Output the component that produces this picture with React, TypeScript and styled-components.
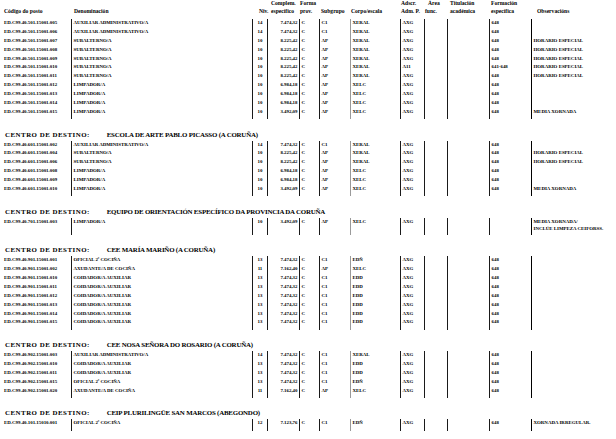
import React from 'react';
import styled, { createGlobalStyle } from 'styled-components';

const GlobalStyle = createGlobalStyle`
  html, body {
    margin: 0;
    padding: 0;
    background: #fff;
  }
  body {
    font-family: "Liberation Serif", "Times New Roman", serif;
    color: #000;
  }
`;

// column widths of the body rows (left borders at 71, 252, 267, 299, 319, 350, 400, 424, 447, 489, 531)
const BODY_COLS = '71px 181px 15px 32px 20px 31px 50px 24px 23px 42px 42px 85px';
// the header labels sit a little to the right of the rules
const HEAD_COLS = '74px 185px 12px 29px 21px 30px 50px 24px 25px 41px 46px 79px';

const Page = styled.div`
  width: 616px;
  padding-top: 0.25px;
`;

const HeaderRow = styled.div`
  display: grid;
  grid-template-columns: ${HEAD_COLS};
  align-items: end;
  height: 15px;
  margin-bottom: 4px;
`;

const HeadCell = styled.div<{ $indent?: number; $pad?: number }>`
  font-size: 5.6px;
  font-weight: 700;
  line-height: 7.5px;
  white-space: nowrap;
  padding-left: ${(p) => p.$pad ?? 0}px;
  text-indent: ${(p) => p.$indent ?? 0}px;
`;

const Section = styled.section<{ $first?: boolean }>`
  margin-top: ${(p) => (p.$first ? 0 : 9.5)}px;
`;

const Heading = styled.h2`
  margin: 0;
  padding-left: 5px;
  font-size: 6.9px;
  font-weight: 700;
  line-height: 12px;
  letter-spacing: -0.2px;
  white-space: nowrap;
`;

const HeadingLabel = styled.span`
  display: inline-block;
  width: 101.7px;
  letter-spacing: 0.5px;
`;

const Row = styled.div<{ $tail?: boolean }>`
  display: grid;
  grid-template-columns: ${BODY_COLS};
  font-size: 4.9px;
  font-weight: 700;
  line-height: 8.85px;

  ${(p) => p.$tail && '& > div { padding-bottom: 2.5px; }'}
`;

type Rule = 'none' | 'black' | 'gray' | 'heavy';

const Cell = styled.div<{ $rule: Rule; $align?: 'left' | 'center' | 'right'; $multi?: boolean }>`
  box-sizing: border-box;
  white-space: nowrap;
  text-align: ${(p) => p.$align ?? 'left'};
  padding-left: ${(p) => (p.$rule === 'none' ? 4 : p.$align === 'left' || !p.$align ? 1.5 : 0)}px;
  padding-right: ${(p) => (p.$align === 'right' ? 1.5 : 0)}px;
  border-left: ${(p) =>
    p.$rule === 'none'
      ? '0'
      : p.$rule === 'gray'
      ? '1px solid #9a9a9a'
      : p.$rule === 'heavy'
      ? '1.5px solid #000'
      : '1px solid #1a1a1a'};
  ${(p) => p.$multi && 'line-height: 7px; padding-top: 0.9px;'}
`;

const RULES: Rule[] = ['none', 'black', 'black', 'black', 'black', 'black', 'gray', 'black', 'black', 'black', 'black', 'heavy'];
const ALIGN: ('left' | 'center' | 'right')[] = ['left', 'left', 'center', 'right', 'left', 'left', 'left', 'left', 'left', 'left', 'left', 'left'];

const HEADERS: { lines: string[]; indent?: number }[] = [
  { lines: ['Código do posto'] },
  { lines: ['Denominación'] },
  { lines: ['Niv.'] },
  { lines: ['Complem.', 'específico'] },
  { lines: ['Forma', 'prov.'] },
  { lines: ['Subgrupo'] },
  { lines: ['Corpo/escala'] },
  { lines: ['Adscr.', 'Adm. P.'] },
  { lines: ['Área', 'func.'], indent: 3 },
  { lines: ['Titulación', 'académica'] },
  { lines: ['Formación', 'específica'] },
  { lines: ['Observacións'] },
];

const AUX = 'AUXILIAR ADMINISTRATIVO/A';
const SUB = 'SUBALTERNO/A';
const LIM = 'LIMPADOR/A';
const OFI = 'OFICIAL 2ª COCIÑA';
const AXU = 'AXUDANTE/A DE COCIÑA';
const COI = 'COIDADOR/A AUXILIAR';
const HOR = 'HORARIO ESPECIAL';

// code, denominación, niv, complemento, forma, subgrupo, corpo, adscr, área, titulación, formación, observacións
type Post = string[];

const p = (
  code: string,
  name: string,
  niv: string,
  comp: string,
  sub: string,
  corpo: string,
  adscr: string,
  form: string,
  obs = ''
): Post => [code, name, niv, comp, 'C', sub, corpo, adscr, '', '', form, obs];

const SECTIONS: { centre?: string; posts: Post[] }[] = [
  {
    posts: [
      p('ED.C99.40.501.15001.005', AUX, '14', '7.474,32', 'C1', 'XERAL', 'AXG', '648'),
      p('ED.C99.40.501.15001.006', AUX, '14', '7.474,32', 'C1', 'XERAL', 'AXG', '648'),
      p('ED.C99.40.501.15001.007', SUB, '10', '8.225,42', 'AP', 'XERAL', 'AXG', '648', HOR),
      p('ED.C99.40.501.15001.008', SUB, '10', '8.225,42', 'AP', 'XERAL', 'AXG', '648', HOR),
      p('ED.C99.40.501.15001.009', SUB, '10', '8.225,42', 'AP', 'XERAL', 'AXG', '648', HOR),
      p('ED.C99.40.501.15001.010', SUB, '10', '8.225,42', 'AP', 'XERAL', 'A11', '641-648', HOR),
      p('ED.C99.40.501.15001.011', SUB, '10', '8.225,42', 'AP', 'XERAL', 'AXG', '648', HOR),
      p('ED.C99.40.501.15001.012', LIM, '10', '6.984,18', 'AP', 'XELC', 'AXG', '648'),
      p('ED.C99.40.501.15001.013', LIM, '10', '6.984,18', 'AP', 'XELC', 'AXG', '648'),
      p('ED.C99.40.501.15001.014', LIM, '10', '6.984,18', 'AP', 'XELC', 'AXG', '648'),
      p('ED.C99.40.501.15001.015', LIM, '10', '3.492,09', 'AP', 'XELC', 'AXG', '648', 'MEDIA XORNADA'),
    ],
  },
  {
    centre: 'ESCOLA DE ARTE PABLO PICASSO (A CORUÑA)',
    posts: [
      p('ED.C99.40.601.15001.002', AUX, '14', '7.474,32', 'C1', 'XERAL', 'AXG', '648'),
      p('ED.C99.40.601.15001.004', SUB, '10', '8.225,42', 'AP', 'XERAL', 'AXG', '648', HOR),
      p('ED.C99.40.601.15001.006', SUB, '10', '8.225,42', 'AP', 'XERAL', 'AXG', '648', HOR),
      p('ED.C99.40.601.15001.008', LIM, '10', '6.984,18', 'AP', 'XELC', 'AXG', '648'),
      p('ED.C99.40.601.15001.009', LIM, '10', '6.984,18', 'AP', 'XELC', 'AXG', '648'),
      p('ED.C99.40.601.15001.010', LIM, '10', '3.492,09', 'AP', 'XELC', 'AXG', '648', 'MEDIA XORNADA'),
    ],
  },
  {
    centre: 'EQUIPO DE ORIENTACIÓN ESPECÍFICO DA PROVINCIA DA CORUÑA',
    posts: [
      p('ED.C99.40.701.15001.003', LIM, '10', '3.492,09', 'AP', 'XELC', 'AXG', '', 'MEDIA XORNADA/\nINCLÚE LIMPEZA CEIFORSS.'),
    ],
  },
  {
    centre: 'CEE MARÍA MARIÑO (A CORUÑA)',
    posts: [
      p('ED.C99.40.901.15001.001', OFI, '13', '7.474,32', 'C1', 'EDÑ', 'AXG', '648'),
      p('ED.C99.40.901.15001.002', AXU, '11', '7.162,40', 'AP', 'XELC', 'AXG', '648'),
      p('ED.C99.40.901.15001.010', COI, '13', '7.474,32', 'C1', 'EDD', 'AXG', '648'),
      p('ED.C99.40.901.15001.011', COI, '13', '7.474,32', 'C1', 'EDD', 'AXG', '648'),
      p('ED.C99.40.901.15001.012', COI, '13', '7.474,32', 'C1', 'EDD', 'AXG', '648'),
      p('ED.C99.40.901.15001.013', COI, '13', '7.474,32', 'C1', 'EDD', 'AXG', '648'),
      p('ED.C99.40.901.15001.014', COI, '13', '7.474,32', 'C1', 'EDD', 'AXG', '648'),
      p('ED.C99.40.901.15001.015', COI, '13', '7.474,32', 'C1', 'EDD', 'AXG', '648'),
    ],
  },
  {
    centre: 'CEE NOSA SEÑORA DO ROSARIO (A CORUÑA)',
    posts: [
      p('ED.C99.40.902.15001.003', AUX, '14', '7.474,32', 'C1', 'XERAL', 'AXG', '648'),
      p('ED.C99.40.902.15001.010', COI, '13', '7.474,32', 'C1', 'EDD', 'AXG', '648'),
      p('ED.C99.40.902.15001.011', COI, '13', '7.474,32', 'C1', 'EDD', 'AXG', '648'),
      p('ED.C99.40.902.15001.015', OFI, '13', '7.474,32', 'C1', 'EDÑ', 'AXG', '648'),
      p('ED.C99.40.902.15001.020', AXU, '11', '7.162,40', 'AP', 'XELC', 'AXG', '648'),
    ],
  },
  {
    centre: 'CEIP PLURILINGÜE SAN MARCOS (ABEGONDO)',
    posts: [
      p('ED.C99.40.101.15010.001', OFI, '12', '7.123,76', 'C1', 'EDÑ', 'AXG', '648', 'XORNADA IRREGULAR.'),
    ],
  },
];

const Lines: React.FC<{ text: string }> = ({ text }) => (
  <>
    {text.split('\n').map((line, j) => (
      <React.Fragment key={j}>
        {j > 0 && <br />}
        {line}
      </React.Fragment>
    ))}
  </>
);

const PostRow: React.FC<{ post: Post; tail: boolean }> = ({ post, tail }) => (
  <Row $tail={tail}>
    {post.map((value, i) => (
      <Cell key={i} $rule={RULES[i]} $align={ALIGN[i]} $multi={value.includes('\n')}>
        <Lines text={value} />
      </Cell>
    ))}
  </Row>
);

const App: React.FC = () => {
  return (
    <Page>
      <GlobalStyle />
      <HeaderRow>
        {HEADERS.map((h, i) => (
          <HeadCell key={i} $pad={i === 0 ? 4 : 0} $indent={h.indent}>
            <Lines text={h.lines.join('\n')} />
          </HeadCell>
        ))}
      </HeaderRow>

      {SECTIONS.map((s, si) => (
        <Section key={si} $first={si === 0}>
          {s.centre && (
            <Heading>
              <HeadingLabel>CENTRO DE DESTINO:</HeadingLabel>
              {s.centre}
            </Heading>
          )}
          {s.posts.map((post, pi) => (
            <PostRow key={pi} post={post} tail={pi === s.posts.length - 1} />
          ))}
        </Section>
      ))}
    </Page>
  );
};

export default App;
